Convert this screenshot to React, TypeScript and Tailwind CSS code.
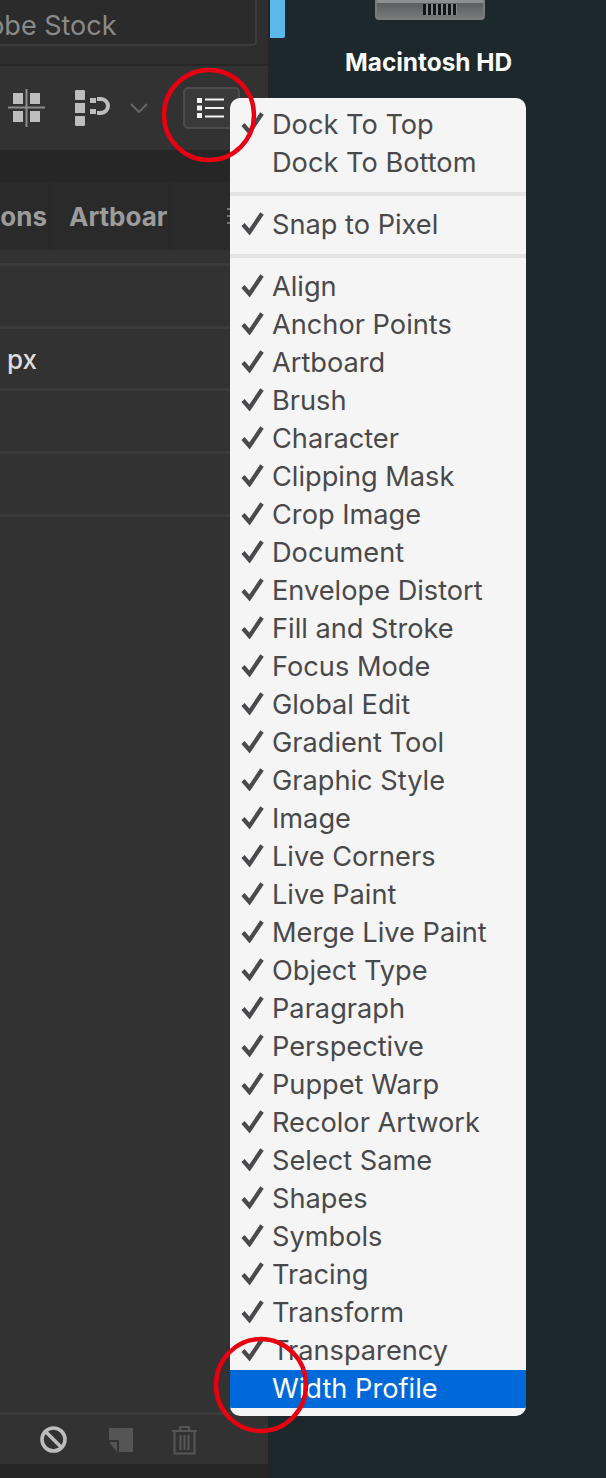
const font = "[font-family:Inter,'Liberation_Sans',sans-serif]";

const dockItems = [{ label: 'Dock To Top', checked: true }, { label: 'Dock To Bottom', checked: false }];

const panelItems = [
  'Align', 'Anchor Points', 'Artboard', 'Brush', 'Character', 'Clipping Mask', 'Crop Image', 'Document',
  'Envelope Distort', 'Fill and Stroke', 'Focus Mode', 'Global Edit', 'Gradient Tool', 'Graphic Style',
  'Image', 'Live Corners', 'Live Paint', 'Merge Live Paint', 'Object Type', 'Paragraph', 'Perspective',
  'Puppet Warp', 'Recolor Artwork', 'Select Same', 'Shapes', 'Symbols', 'Tracing', 'Transform', 'Transparency',
];

function Check() {
  return (
    <svg width="23" height="24" viewBox="0 0 23 24" className="absolute left-[11px] top-[5px]">
      <path d="M2 13.5 L8.5 21 L21 2.5" fill="none" stroke="#4a4a4c" strokeWidth="4.2" />
    </svg>
  );
}

function MenuRow({ label, checked, active }: { label: string; checked?: boolean; active?: boolean }) {
  return (
    <div
      className={`relative h-[38px] pl-[42px] text-[27.2px] leading-[38px] whitespace-nowrap ${
        active ? 'bg-[#0069d9] text-white' : 'text-[#49494b]'
      }`}
    >
      {checked && <Check />}
      {label}
    </div>
  );
}

function Toolbar() {
  return (
    <div className="flex h-[84px] items-center overflow-hidden bg-[#323232] pl-[8px]">
      <svg width="37" height="38" viewBox="0 0 37 38" className="shrink-0">
        <path d="M0 18.5H37M18.5 0V38" stroke="#8c8c8c" strokeWidth="2" />
        <rect x="5" y="4" width="10" height="11" fill="#bdbdbd" />
        <rect x="22" y="4" width="10" height="11" fill="#bdbdbd" />
        <rect x="5" y="22" width="10" height="11" fill="#bdbdbd" />
        <rect x="22" y="22" width="10" height="11" fill="#bdbdbd" />
      </svg>
      <svg width="36" height="36" viewBox="0 0 36 36" className="ml-[30px] shrink-0">
        <rect x="0" y="0" width="10" height="10" rx="1" fill="#bdbdbd" />
        <rect x="0" y="13" width="10" height="10" fill="#bdbdbd" />
        <rect x="0" y="26" width="10" height="10" rx="1" fill="#bdbdbd" />
        <rect x="15" y="8" width="6" height="5" fill="#bdbdbd" />
        <rect x="15" y="19" width="6" height="5" fill="#bdbdbd" />
        <path d="M22 9H26A7 7 0 0 1 26 23H22" fill="none" stroke="#bdbdbd" strokeWidth="4" />
      </svg>
      <svg width="18" height="11" viewBox="0 0 18 11" className="ml-[19px] shrink-0">
        <path d="M1 1L9 9L17 1" fill="none" stroke="#666666" strokeWidth="2" />
      </svg>
      <div className="ml-[35px] flex h-[42px] w-[57px] shrink-0 items-center rounded-[5px] border-2 border-[#4c4c4c] bg-[#3a3a3a] pl-[12px]">
        <svg width="27" height="20" viewBox="0 0 27 20">
          <rect x="0" y="0" width="5" height="5" fill="#f2f2f2" />
          <rect x="0" y="7.5" width="5" height="5" fill="#f2f2f2" />
          <rect x="0" y="15" width="5" height="5" fill="#f2f2f2" />
          <path d="M8 1.5H27M8 10H27M8 18.5H27" stroke="#f2f2f2" strokeWidth="2" />
        </svg>
      </div>
    </div>
  );
}

function TabsRow() {
  return (
    <div className="flex h-[68px] items-center overflow-hidden bg-[#2a2a2a] text-[26px] font-bold text-[#9c9c9c]">
      <div className="flex h-full w-[50px] shrink-0 items-center justify-end border-r border-[#262626] pr-[2px]">
        <span>ions</span>
      </div>
      <div className="flex h-full w-[120px] shrink-0 items-center overflow-hidden border-r border-[#262626] pl-[19px]">
        <span>Artboar</span>
      </div>
      <svg width="8" height="20" viewBox="0 0 8 20" className="ml-[57px] shrink-0">
        <path d="M0 3H8M0 10H8M0 17H8" stroke="#777777" strokeWidth="2" />
      </svg>
    </div>
  );
}

function PropertyRows() {
  return (
    <div className="flex-1 bg-[#323232]">
      <div className="h-[16px] border-b-[3px] border-[#3b3b3b]" />
      <div className="h-[63px] border-b-[3px] border-[#3b3b3b]" />
      <div className="flex h-[62px] items-center border-b-[3px] border-[#3b3b3b] pt-[2px] pl-[7px] text-[26px] font-medium text-[#dcdcdc]">
        px
      </div>
      <div className="h-[63px] border-b-[3px] border-[#3b3b3b]" />
      <div className="h-[63px] border-b-[3px] border-[#3b3b3b]" />
    </div>
  );
}

function BottomBar() {
  return (
    <div className="flex h-[52px] items-center border-t-[3px] border-[#3b3b3b] bg-[#323232] pl-[40px]">
      <svg width="27" height="27" viewBox="0 0 27 27" className="shrink-0">
        <circle cx="13.5" cy="13.5" r="11.5" fill="none" stroke="#bdbdbd" strokeWidth="3.6" />
        <path d="M5.5 5.5L21.5 21.5" stroke="#bdbdbd" strokeWidth="3.6" />
      </svg>
      <svg width="26" height="26" viewBox="0 0 26 26" className="ml-[41px] shrink-0">
        <path d="M1 1H25V25H11V13H1Z" fill="#555555" />
        <path d="M1 15H9V25Z" fill="#555555" />
      </svg>
      <svg width="27" height="30" viewBox="0 0 27 30" className="ml-[37px] shrink-0">
        <path d="M1 6H26M9 6V2H18V6M3.5 6V28.5H23.5V6M9.5 10V25M13.5 10V25M17.5 10V25" fill="none" stroke="#555555" strokeWidth="2.2" />
      </svg>
    </div>
  );
}

function LeftPanel() {
  return (
    <div className="flex h-full w-[270px] shrink-0 flex-col border-r-2 border-[#252525] bg-[#2b2b2b]">
      <div className="h-[64px] shrink-0 bg-[#2e2e2e] pr-[11px]">
        <div className="flex h-[46px] items-center overflow-hidden rounded-br-[5px] border-r-2 border-b-2 border-[#3c3c3c] bg-[#2b2b2b] pt-[9px] text-[27px] text-[#8a8a8a]">
          <span className="ml-[-47px] whitespace-nowrap">Adobe Stock</span>
        </div>
      </div>
      <div className="h-[2px] shrink-0 bg-[#262626]" />
      <Toolbar />
      <div className="h-[32px] shrink-0 bg-[#262626]" />
      <TabsRow />
      <PropertyRows />
      <BottomBar />
      <div className="h-[14px] shrink-0 bg-[#262626]" />
    </div>
  );
}

function Desktop() {
  return (
    <div className="relative flex-1 bg-[#1d282d]">
      <div className="h-[38px] w-[15px] rounded-br-[2px] bg-[#5ab8ea]" />
      <div className="absolute left-[105px] top-0 h-[20px] w-[110px] rounded-b-[4px] border-2 border-t-0 border-[#7a7c7e] bg-[linear-gradient(180deg,#8d8f91_0,#8d8f91_3px,#5c5e60_3px,#77797b_100%)]">
        <div className="absolute top-[4px] left-[46px] h-[11px] w-[34px] bg-[repeating-linear-gradient(90deg,#141414_0,#141414_3px,#85878a_3px,#85878a_5px)]" />
      </div>
      <div className="absolute left-[75px] top-[46px] text-[24.4px] leading-[32px] font-bold whitespace-nowrap text-white">
        Macintosh HD
      </div>
    </div>
  );
}

export default function App() {
  return (
    <div className={`relative flex h-[1478px] w-[606px] overflow-hidden ${font}`}>
      <LeftPanel />
      <Desktop />

      {/* Panel menu */}
      <div className="absolute top-[98px] left-[230px] w-[296px] overflow-hidden rounded-[10px] bg-[#f5f5f6] pt-[8px] pb-[8px]">
        {dockItems.map((item) => (
          <MenuRow key={item.label} label={item.label} checked={item.checked} />
        ))}
        <div className="my-[10px] h-[4px] bg-[#e3e3e3]" />
        <MenuRow label="Snap to Pixel" checked />
        <div className="my-[10px] h-[4px] bg-[#e3e3e3]" />
        {panelItems.map((label) => (
          <MenuRow key={label} label={label} checked />
        ))}
        <MenuRow label="Width Profile" active />
      </div>

      {/* Red annotation circles */}
      <svg width="100" height="100" viewBox="0 0 100 100" className="absolute top-[65px] left-[159px]">
        <circle cx="50" cy="50" r="45" fill="none" stroke="#e60012" strokeWidth="4.5" />
      </svg>
      <svg width="100" height="100" viewBox="0 0 100 100" className="absolute top-[1335px] left-[212px]">
        <ellipse cx="49" cy="50" rx="45" ry="46" fill="none" stroke="#e60012" strokeWidth="4.5" />
      </svg>
    </div>
  );
}
